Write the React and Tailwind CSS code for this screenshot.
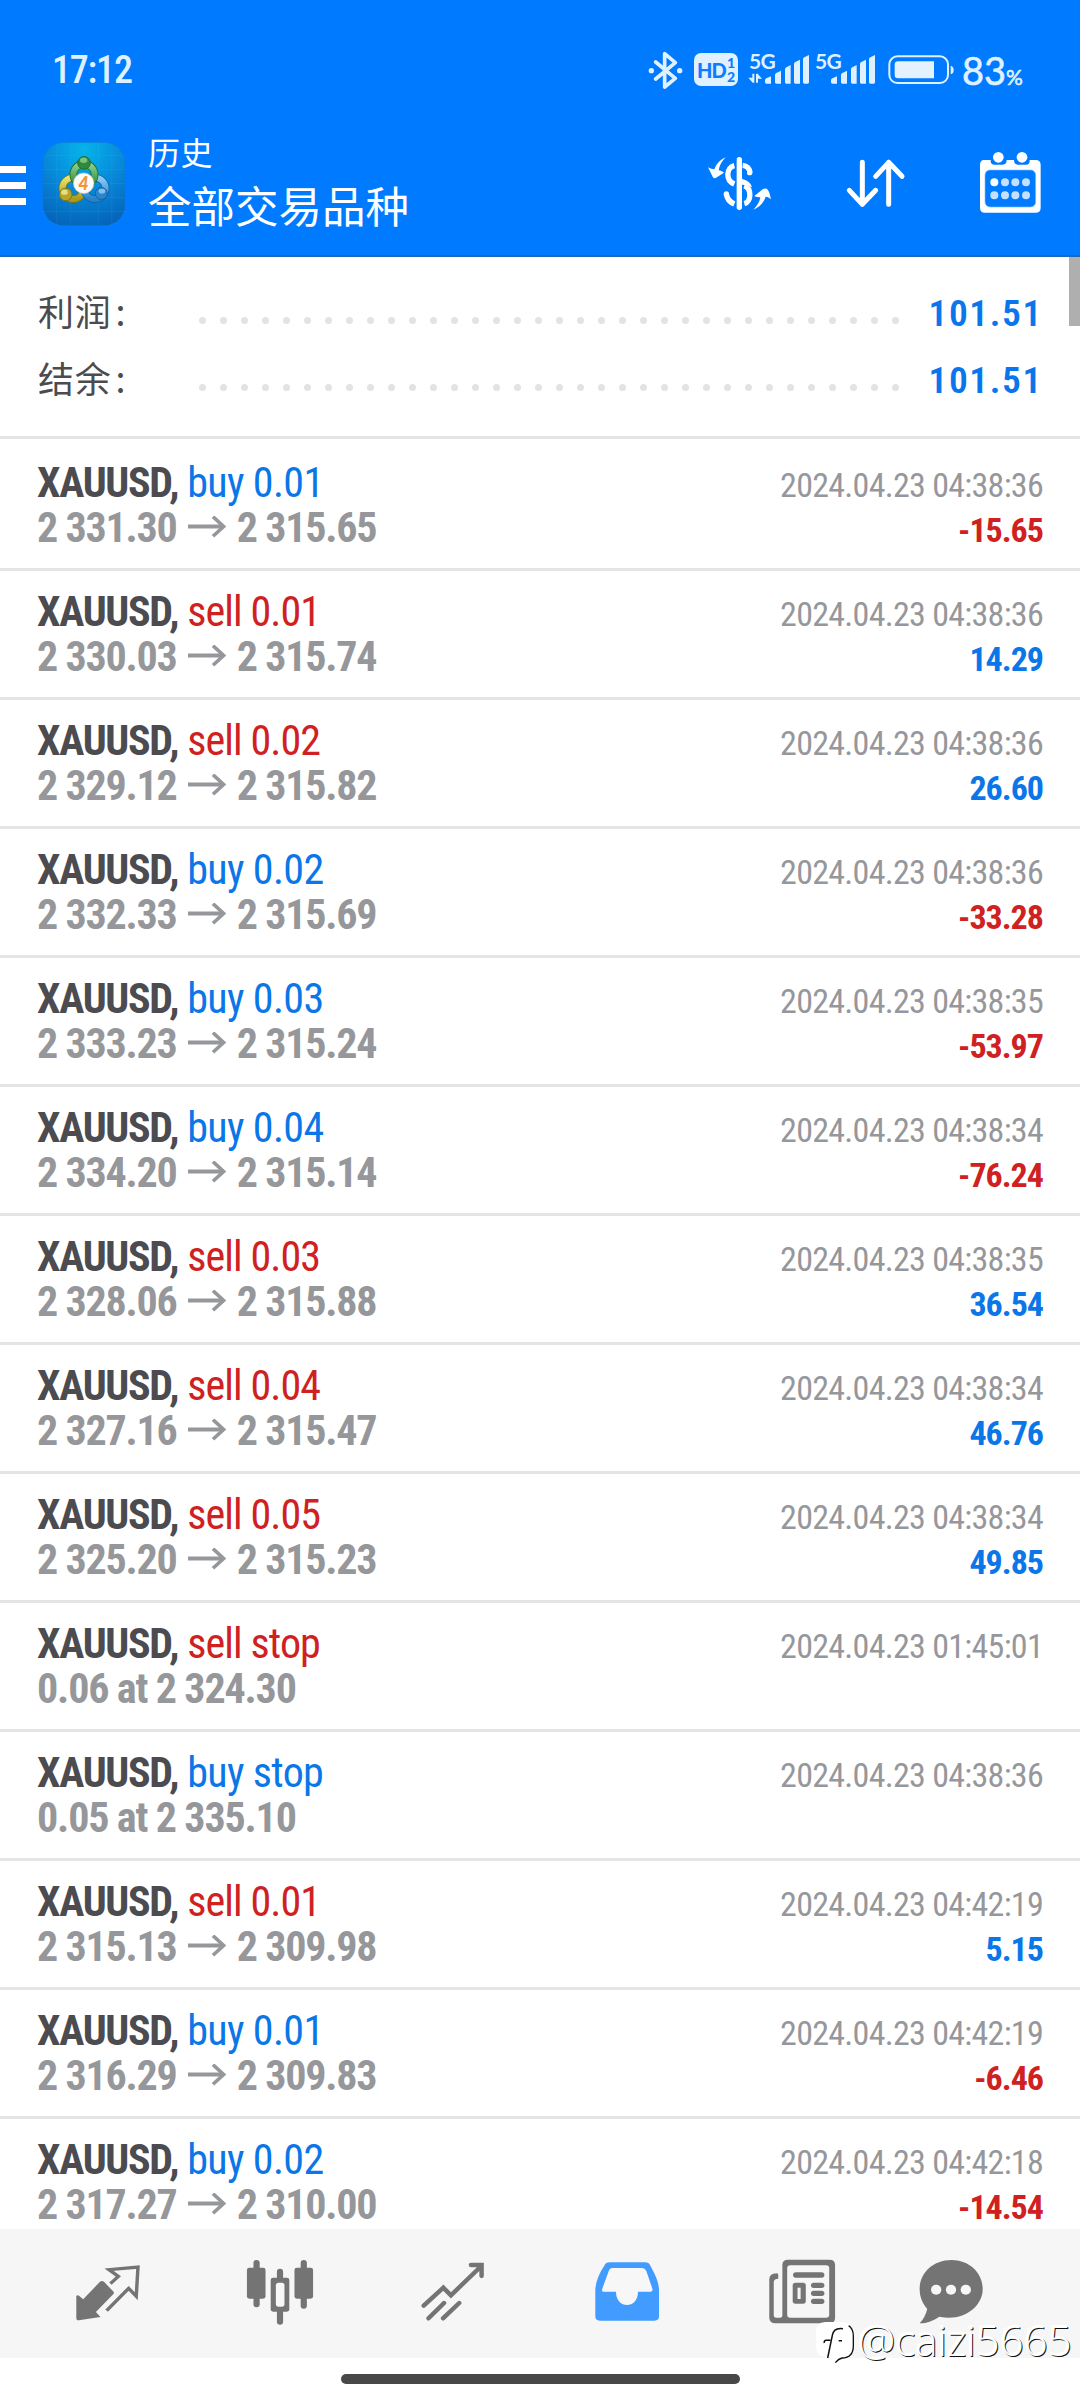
const BUY = 'text-[#0b76e8]';
const SELL = 'text-[#cf2121]';

const DEALS = [
  { side: 'buy', label: 'buy 0.01', open: '2 331.30', close: '2 315.65', time: '2024.04.23 04:38:36', profit: '-15.65' },
  { side: 'sell', label: 'sell 0.01', open: '2 330.03', close: '2 315.74', time: '2024.04.23 04:38:36', profit: '14.29' },
  { side: 'sell', label: 'sell 0.02', open: '2 329.12', close: '2 315.82', time: '2024.04.23 04:38:36', profit: '26.60' },
  { side: 'buy', label: 'buy 0.02', open: '2 332.33', close: '2 315.69', time: '2024.04.23 04:38:36', profit: '-33.28' },
  { side: 'buy', label: 'buy 0.03', open: '2 333.23', close: '2 315.24', time: '2024.04.23 04:38:35', profit: '-53.97' },
  { side: 'buy', label: 'buy 0.04', open: '2 334.20', close: '2 315.14', time: '2024.04.23 04:38:34', profit: '-76.24' },
  { side: 'sell', label: 'sell 0.03', open: '2 328.06', close: '2 315.88', time: '2024.04.23 04:38:35', profit: '36.54' },
  { side: 'sell', label: 'sell 0.04', open: '2 327.16', close: '2 315.47', time: '2024.04.23 04:38:34', profit: '46.76' },
  { side: 'sell', label: 'sell 0.05', open: '2 325.20', close: '2 315.23', time: '2024.04.23 04:38:34', profit: '49.85' },
  { side: 'sell', label: 'sell stop', order: '0.06 at 2 324.30', time: '2024.04.23 01:45:01' },
  { side: 'buy', label: 'buy stop', order: '0.05 at 2 335.10', time: '2024.04.23 04:38:36' },
  { side: 'sell', label: 'sell 0.01', open: '2 315.13', close: '2 309.98', time: '2024.04.23 04:42:19', profit: '5.15' },
  { side: 'buy', label: 'buy 0.01', open: '2 316.29', close: '2 309.83', time: '2024.04.23 04:42:19', profit: '-6.46' },
  { side: 'buy', label: 'buy 0.02', open: '2 317.27', close: '2 310.00', time: '2024.04.23 04:42:18', profit: '-14.54' },
];

function Bluetooth() {
  return (
    <svg className="h-[38px] w-[35px] shrink-0" viewBox="84 60 105 114" fill="none" stroke="#dff1ff" strokeWidth="11" strokeLinejoin="round" strokeLinecap="round">
      <path d="M107 93l59 49-32 26V68l32 27-59 49" />
      <circle cx="94" cy="119" r="8" fill="#dff1ff" stroke="none" />
      <circle cx="179" cy="119" r="8" fill="#dff1ff" stroke="none" />
    </svg>
  );
}

function Signal({ data }) {
  return (
    <div className="relative h-[33px] w-[62px] shrink-0">
      <span className="absolute -top-[3px] left-px text-[21px] leading-6 font-bold tracking-[-0.6px] [font-family:Lato,sans-serif]">5G</span>
      <svg className="h-[33px] w-[62px]" viewBox="384 67 186 99" fill="#dff1ff">
        <path d="M435 152q0-4 4-6l14-6v22h-14q-4 0-4-4zM465 136q0-4 4-6l14-7v39h-14q-4 0-4-4zM495 119q0-4 4-6l13-7v56h-13q-4 0-4-4zM522 103q0-4 4-6l14-7v72h-14q-4 0-4-4zM549 89q0-4 4-6l14-7v82q0 4-4 4h-10q-4 0-4-4z" />
        {data && <path d="M397 132h6v27h-5l-13-15h12zM408 132h5l13 15h-12v12h-6z" />}
      </svg>
    </div>
  );
}

function Battery() {
  return (
    <svg className="h-[30px] w-[66px] shrink-0" viewBox="804 74 198 90">
      <rect x="808" y="78" width="176" height="80" rx="24" fill="none" stroke="#dff1ff" strokeWidth="6" />
      <path d="M834 93h108v51H834q-10 0-10-10v-31q0-10 10-10z" fill="#e4f2ff" />
      <path d="M992 106q9 2 9 13t-9 13z" fill="#dff1ff" />
    </svg>
  );
}

function StatusBar() {
  return (
    <div className="flex h-[140px] pt-[51px] text-[#dff1ff]">
      <span className="ml-[52px] w-[90px] text-[38px] leading-[38px] font-medium tracking-[-1.2px] [font-family:Roboto,sans-serif] [font-stretch:85%]">17:12</span>
      <div className="ml-[506px] flex h-[38px]">
        <Bluetooth />
        <div className="mt-[2px] ml-[11px] flex h-[33px] w-[44px] items-center justify-center rounded-[7px] bg-[#dff1ff] font-black text-[#0f7cff] [font-family:Lato,sans-serif]">
          <span className="text-[20px] leading-5 tracking-[-0.8px]">HD</span>
          <span className="ml-px flex flex-col text-[14px] leading-[14px]"><i className="not-italic">1</i><i className="not-italic">2</i></span>
        </div>
        <div className="mt-px ml-[10px]"><Signal data /></div>
        <div className="mt-px ml-[4px]"><Signal /></div>
        <div className="mt-[4px] ml-[12px]"><Battery /></div>
        <span className="ml-[8px] flex items-baseline text-[38px] leading-[38px] [-webkit-text-stroke:0.6px_#dff1ff] [font-family:Lato,sans-serif]">83<span className="text-[21px]">%</span></span>
      </div>
    </div>
  );
}

function AppLogo() {
  return (
    <svg className="h-[84px] w-[84px] shrink-0" viewBox="20 17 250 253">
      <defs>
        <radialGradient id="sky" cx="0.5" cy="0.08" r="0.95"><stop offset="0" stopColor="#05b4ea" /><stop offset="0.45" stopColor="#078ddc" /><stop offset="1" stopColor="#0564b9" /></radialGradient>
        <linearGradient id="green" x1="0" y1="0" x2="0" y2="1"><stop offset="0" stopColor="#8ed08a" /><stop offset="1" stopColor="#2b8a35" /></linearGradient>
        <linearGradient id="gold" x1="0" y1="0" x2="0" y2="1"><stop offset="0" stopColor="#e9e36b" /><stop offset="1" stopColor="#a99a1b" /></linearGradient>
        <linearGradient id="blue" x1="0" y1="0" x2="0" y2="1"><stop offset="0" stopColor="#8ccaf5" /><stop offset="1" stopColor="#2683cb" /></linearGradient>
      </defs>
      <rect x="21" y="18" width="248" height="251" rx="62" fill="url(#sky)" stroke="#1477d8" strokeWidth="2" />
      <path d="M24 58h242M22 100h246M22 142h246M22 184h246M22 226h246M63 20v247M105 20v247M188 20v247M229 20v247" stroke="#6cc6f5" strokeOpacity="0.16" strokeWidth="2" />
      <g fill="none">
        <circle cx="112" cy="157" r="32" stroke="#7d7413" strokeWidth="23" />
        <circle cx="112" cy="157" r="32" stroke="url(#gold)" strokeWidth="18" />
        <circle cx="178" cy="157" r="32" stroke="#1263a5" strokeWidth="23" />
        <circle cx="178" cy="157" r="32" stroke="url(#blue)" strokeWidth="18" />
        <circle cx="145" cy="115" r="32" stroke="#1e6b2c" strokeWidth="23" />
        <circle cx="145" cy="115" r="32" stroke="url(#green)" strokeWidth="18" />
      </g>
      <circle cx="145" cy="80" r="19" fill="#2f8b3a" stroke="#1e6b2c" strokeWidth="3" />
      <ellipse cx="144" cy="72" rx="11" ry="8" fill="#9ad79b" fillOpacity="0.7" />
      <circle cx="90" cy="175" r="19" fill="#b6a529" stroke="#7d7413" strokeWidth="3" />
      <ellipse cx="86" cy="168" rx="10" ry="8" fill="#f3eb9d" fillOpacity="0.8" />
      <circle cx="197" cy="172" r="18" fill="#2a86cd" stroke="#1263a5" strokeWidth="3" />
      <ellipse cx="199" cy="165" rx="10" ry="7" fill="#a9d8f8" fillOpacity="0.7" />
      <circle cx="144" cy="141" r="31" fill="#fbfbfa" stroke="#b9c9c4" strokeWidth="2" />
      <text x="143" y="161" textAnchor="middle" fontSize="54" fontWeight="900" fontStyle="italic" fontFamily="Lato" fill="#f0953a">4</text>
    </svg>
  );
}

function CurrencyIcon() {
  return (
    <svg className="h-[72px] w-[100px]" viewBox="0 0 300 216" fill="#fff">
      <rect x="140" y="33" width="16" height="159" rx="8" />
      <path d="M133 59c-25 6-27 44 0 55M158 58c13 1 21 10 22 22M163 119c22 8 22 48 0 54M109 144c2 14 12 25 24 30" fill="none" stroke="#fff" strokeWidth="16" />
      <path d="M156 98c14 5 26 10 30 26-10-5-20-7-30-8z" />
      <circle cx="179" cy="80" r="8" /><circle cx="109" cy="144" r="8" />
      <path d="M107 34c-10 10-18 22-21 39 6 1 12 4 16 7l-25 16q-6 2-9-4L54 64c7 4 12 6 19 6 6-17 18-29 34-36z" />
      <path d="M190 191c11-11 19-23 21-37-6 0-12-1-18-4l25-20q6-4 12-2 7 2 13 32c-5-5-10-7-16-8-7 20-19 32-37 39z" />
    </svg>
  );
}

function SortIcon() {
  return (
    <svg className="h-[72px] w-[70px]" viewBox="660 348 210 216" fill="none" stroke="#fff" strokeWidth="15" strokeLinecap="round" strokeLinejoin="round">
      <path d="M727 397v126M688 481l39 42 40-42M806 523V397M767 439l39-42 40 42" />
    </svg>
  );
}

function CalendarIcon() {
  return (
    <svg className="h-[72px] w-[70px]" viewBox="1065 348 210 216">
      <path d="M1092 390h20q-1 14 12 14h24q12 0 12-14h22q0 14 12 14h24q12 0 11-14h18q15 0 15 15v128q0 15-15 15h-152q-15 0-15-15V405q0-15 12-15z" fill="#fff" />
      <rect x="1095" y="420" width="152" height="111" rx="15" fill="#007aff" stroke="#7fbfff" strokeWidth="2" />
      <circle cx="1135" cy="382" r="16" fill="#fff" /><circle cx="1206" cy="382" r="16" fill="#fff" />
      <circle cx="1123" cy="457" r="12" fill="#fff" />
      <g fill="#c3e1ff">
        <circle cx="1155" cy="457" r="12" /><circle cx="1186" cy="457" r="12" /><circle cx="1218" cy="457" r="12" />
        <circle cx="1123" cy="496" r="12" /><circle cx="1155" cy="496" r="12" /><circle cx="1186" cy="496" r="12" /><circle cx="1218" cy="496" r="12" />
      </g>
    </svg>
  );
}

function AppBar() {
  return (
    <div className="flex h-[115px] items-start text-white">
      <div className="mt-[26px] flex w-[26px] flex-col gap-[9px]">
        <i className="h-[7px] bg-white" /><i className="h-[7px] bg-white" /><i className="h-[7px] bg-white" />
      </div>
      <div className="mt-[2px] ml-[16px]"><AppLogo /></div>
      <div className='ml-[22px] [font-family:"Noto_Sans_CJK_SC",sans-serif]'>
        <p className="-mt-[9px] text-[32px] leading-[40px] tracking-[0.6px]">历史</p>
        <p className="mt-px text-[43.5px] leading-[66px]">全部交易品种</p>
      </div>
      <div className="mt-[6px] ml-auto flex pr-[35px]">
        <CurrencyIcon />
        <div className="ml-[50px]"><SortIcon /></div>
        <div className="ml-[65px]"><CalendarIcon /></div>
      </div>
    </div>
  );
}

function SummaryLine({ label, value }) {
  return (
    <div className="flex h-[67px] items-start">
      <span className='w-[162px] pl-px text-[36px] leading-[63px] tracking-[0.8px] text-[#4b4b50] [font-family:"Noto_Sans_CJK_SC",sans-serif]'>{label}<span className="ml-[4px]">:</span></span>
      <span className="mt-[38px] flex gap-[14px]">
        {Array.from({ length: 34 }, (_, i) => <i key={i} className="size-[7px] rounded-full bg-[#e3e3e4]" />)}
      </span>
      <span className="ml-auto text-[37.5px] leading-[69px] font-semibold tracking-[1.6px] text-[#0b76ec] [font-family:Roboto,sans-serif] [font-stretch:87%]">{value}</span>
    </div>
  );
}

function Arrow() {
  return (
    <svg className="mr-[11px] ml-[11px] h-[24px] w-[38px]" viewBox="0 0 38 24" fill="none" stroke="#96979b" strokeWidth="3.6">
      <path d="M0 10.5h35.5" strokeWidth="4" /><path d="M25 0.7l10.5 9.8L25 20.3" />
    </svg>
  );
}

function DealRow({ deal }) {
  const tone = deal.side === 'buy' ? BUY : SELL;
  const labelFit = deal.side === 'buy' ? 'ml-[9px] tracking-[-0.65px]' : 'ml-[9px] tracking-[-0.9px]';
  return (
    <div className='h-[129px] shrink-0 border-b-[3px] border-[#e4e4e5] pt-[18px] pr-[37px] pl-[37px] text-[42px] leading-[45px] [font-family:"Roboto_Condensed",Roboto,sans-serif]'>
      <div className="flex h-[45px] items-baseline justify-between">
        <p><b className="tracking-[-1.3px] text-[#4b4b50]">XAUUSD,</b><span className={`${labelFit} ${tone}`}>{deal.label}</span></p>
        <span className="text-[34px] leading-none tracking-[-0.72px] text-[#96979b]">{deal.time}</span>
      </div>
      <div className="flex h-[45px] items-baseline justify-between font-bold tracking-[-1.15px] text-[#96979b]">
        {deal.order ? <p>{deal.order}</p> : (
          <p className="flex items-center tracking-[-1.2px]"><span>{deal.open}</span><Arrow /><span>{deal.close}</span></p>
        )}
        {deal.profit && <span className={`text-[34px] leading-none tracking-[-1px] ${deal.profit.startsWith('-') ? SELL : BUY}`}>{deal.profit}</span>}
      </div>
    </div>
  );
}

function NavIcon({ box, children }) {
  return <svg className="h-[72px] w-[72px] shrink-0" viewBox={box} preserveAspectRatio="none" fill="#747474">{children}</svg>;
}

function BottomNav() {
  return (
    <nav className="flex h-[129px] shrink-0 bg-[#f6f6f6] pt-[27px] pl-[72px]">
      <NavIcon box="208.5 139 209 216">
        <path d="M295 214q4 0 7 3l26 28q4 5 0 9l-50 53 13 15-63 10q-7 1-7-6v-68l6-1 14 12 48-52q3-3 6-3z" />
        <path d="M320 222l23-22-27-20 84-8-5 88-22-24-64 67" fill="none" stroke="#747474" strokeWidth="10" />
      </NavIcon>
      <div className="ml-[100px]"><NavIcon box="708.5 139 209 216">
        <rect x="736" y="151" width="18" height="142" rx="9" /><rect x="717" y="174" width="54" height="93" rx="7" />
        <rect x="873" y="151" width="18" height="146" rx="9" /><rect x="855" y="174" width="54" height="93" rx="7" />
        <rect x="804" y="177" width="18" height="168" rx="9" /><rect x="786" y="204" width="54" height="102" rx="7" />
        <rect x="801" y="219" width="25" height="72" rx="8" fill="#f7f7f7" />
      </NavIcon></div>
      <div className="ml-[101px]"><NavIcon box="1211.5 139 209 216">
        <path d="M1231 288l57-54 22 23 86-86M1368 166h31v33M1245 326l45-46M1287 326l47-46" fill="none" stroke="#747474" strokeWidth="13" strokeLinecap="round" />
      </NavIcon></div>
      <div className="ml-[102px]"><NavIcon box="148.5 139 209 216">
        <path d="M202 158h104q10 0 15 10c15 30 25 50 25 75v77q0 13-13 13H174q-13 0-13-13v-77c0-25 10-50 26-75q5-10 15-10z" fill="#429cff" />
        <path d="M211 175h86q8 0 12 9l18 54q1 8-6 8h-36c0 53-64 53-64 0h-36q-6 0-4-8l19-54q3-9 11-9z" fill="#f7f7f7" />
      </NavIcon></div>
      <div className="ml-[103px]"><NavIcon box="655.5 139 209 216">
        <path d="M720 150h120q16 0 16 16v159q0 16-16 16H683q-18 0-18-18V209q0-18 22-18l4 2v14q-13 0-13 11v98q0 8 7 8h11q7 0 7-8V166q0-16 17-16z" />
        <rect x="717" y="167" width="122" height="157" rx="9" fill="#f6f6f6" />
        <rect x="734" y="188" width="91" height="16" rx="8" />
        <rect x="733" y="219" width="38" height="63" rx="8" /><rect x="747" y="234" width="9" height="34" fill="#f6f6f6" />
        <rect x="786" y="219" width="39" height="16" rx="8" /><rect x="786" y="243" width="39" height="16" rx="8" /><rect x="786" y="267" width="39" height="16" rx="8" />
      </NavIcon></div>
      <div className="ml-[77px]"><NavIcon box="1088.5 139 209 216">
        <path d="M1194 151c52 0 91 38 91 87 0 54-58 99-126 83-18 12-33 20-57 20q16-17 22-43c-14-17-22-36-22-60 0-49 40-87 92-87z" />
        <g fill="#f6f6f6"><circle cx="1150" cy="240" r="15" /><circle cx="1193" cy="240" r="15" /><circle cx="1236" cy="240" r="15" /></g>
      </NavIcon></div>
    </nav>
  );
}

function Watermark() {
  return (
    <div className="absolute top-[2317px] left-[814px] flex items-start text-white">
      <svg className="h-[50px] w-[44px] shrink-0" viewBox="12 54 132 150">
        <path d="M46 69h52q32 0 32 32v40q0 36-34 38-12 4-22 14l-8-16-20-2q-28-4-28-34v-40q0-32 28-32z" fill="#fff" />
        <path d="M116 80q14 10 14 30v30q0 36-34 37-10 2-20 14" fill="none" stroke="#111" strokeWidth="4" />
        <path d="M99 89q-28-4-32 20l-14 68M43 132q-2-8 6-8h12M86 125h10" fill="none" stroke="#111" strokeWidth="4.5" />
      </svg>
      <span className='-mt-[2px] text-[42px] leading-[50px] font-light [font-family:"Open_Sans",sans-serif] [text-shadow:1px_1px_0_#111,-1px_-1px_0_#fff]'>@caizi5665</span>
    </div>
  );
}

export default function App() {
  return (
    <div className="relative flex h-[2400px] w-[1080px] flex-col overflow-hidden bg-white">
      <header className="h-[257px] shrink-0 border-b-2 border-[#1668c0] bg-[#007aff]">
        <StatusBar />
        <AppBar />
      </header>
      <section className="flex h-[182px] shrink-0 items-start justify-between border-b-[3px] border-[#e4e4e5] pl-[37px]">
        <div className="w-[1006px] pt-[22px]">
          <SummaryLine label="利润" value="101.51" />
          <SummaryLine label="结余" value="101.51" />
        </div>
        <i className="h-[69px] w-[11px] bg-[#afafaf]" />
      </section>
      <main className="flex h-[1790px] shrink-0 flex-col overflow-hidden pt-[3px]">
        {DEALS.map((deal, i) => <DealRow key={i} deal={deal} />)}
      </main>
      <BottomNav />
      <div className="flex justify-center pt-[16px]"><i className="h-[10px] w-[399px] rounded-full bg-[#484848]" /></div>
      <Watermark />
    </div>
  );
}
